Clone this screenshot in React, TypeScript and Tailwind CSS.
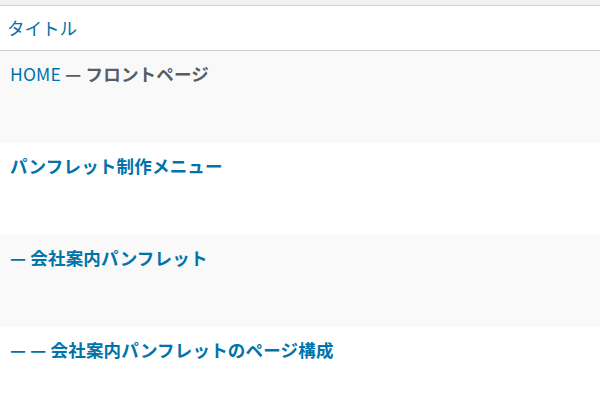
export default function App() {
    const rows = [
        { prefix: 'HOME', title: ' — フロントページ', stripe: true, dark: true },
        { prefix: '', title: 'パンフレット制作メニュー', stripe: false },
        { prefix: '', title: '— 会社案内パンフレット', stripe: true },
        { prefix: '', title: '— — 会社案内パンフレットのページ構成', stripe: false },
    ]

    return (
        <div
            className="w-[600px] h-[413px] overflow-hidden bg-white"
            style={{ fontFamily: '"Noto Sans CJK JP", "Noto Sans", sans-serif' }}
        >
            <div className="h-[5px] bg-[#f1f1f1]" />
            <div className="border-y border-[#ccd0d4] h-[46px] flex items-center pl-[7px]">
                <span className="text-[17.5px] text-[#0073aa] font-normal leading-none">タイトル</span>
            </div>
            {rows.map((row, i) => (
                <div
                    key={i}
                    className={`h-[92px] px-[10px] pt-[11px] ${row.stripe ? 'bg-[#f9f9f9]' : 'bg-white'}`}
                >
                    <div className="text-[17.5px] font-semibold leading-[24px] tracking-[0.2px]">
                        {row.dark ? (
                            <>
                                <span className="text-[#0073aa] font-normal">{row.prefix}</span>
                                <span className="text-[#555d66]">{row.title}</span>
                            </>
                        ) : (
                            <span className="text-[#0073aa]">{row.title}</span>
                        )}
                    </div>
                </div>
            ))}
        </div>
    )
}
